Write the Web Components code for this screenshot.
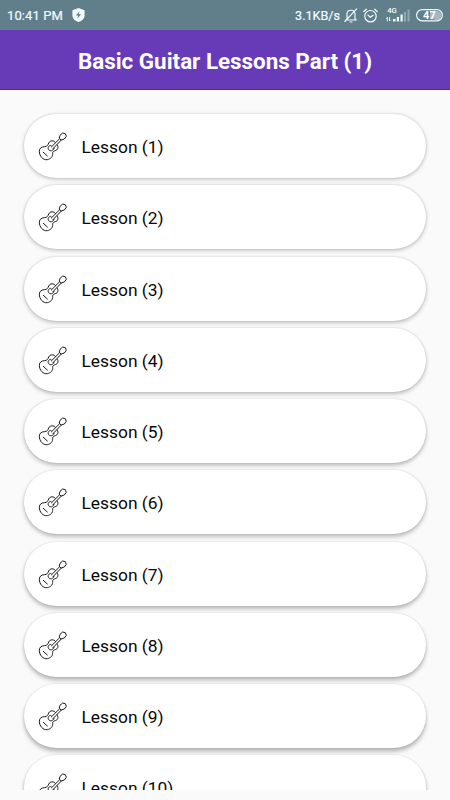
<!DOCTYPE html>
<html lang="en"><head><meta charset="utf-8"><title>Basic Guitar Lessons</title>
<style>body{margin:0;background:#fafafa;font-family:Roboto,sans-serif}</style></head>
<body><guitar-app></guitar-app>
<script>
const define = (name, html, setup) => customElements.define(name, class extends HTMLElement {
  connectedCallback() {
    if (this.shadowRoot) return;
    this.attachShadow({ mode: 'open' }).innerHTML = html;
    if (setup) setup(this);
  }
});

define('status-bar', `<style>
:host{display:flex;align-items:center;height:30px;box-sizing:border-box;padding:0 7px;background:#617e8b;color:#f2fbff;font-size:13px}
.time{letter-spacing:.1px;width:56px;margin-right:9px;white-space:nowrap;-webkit-text-stroke:.2px}
.rate{margin-left:auto;margin-right:4px;font-size:12.600px;white-space:nowrap;-webkit-text-stroke:.2px}
svg{display:block;flex:none;fill:none;stroke:#f2fbff;stroke-linecap:round;stroke-linejoin:round}
.bell{margin-right:5px}.clock{margin-right:8px}.signal{margin-right:6px}
</style>
<span class="time">10:41 PM</span>
<svg width="13" height="14" viewBox="0 0 13 14"><path d="M6.5 0 12.6 2.2V7c0 3.6-2.6 5.800-6.100 7C3 12.800.4 10.600.4 7V2.200Z" fill="#f2fbff" stroke="none"/><path d="M7.500 3.200 3.900 7.500h2.300L5.300 10.800l3.800-4.600H6.800Z" fill="#617e8b" stroke="none"/></svg>
<span class="rate">3.1KB/s</span>
<svg class="bell" width="14" height="15" viewBox="0 0 14 15"><path d="M3 11V6.200C3 3.800 4.500 2.300 7 2.300s4 1.500 4 3.900V11l1.200 1H1.800ZM6 14h2M12.700.8.8 13.500" stroke-width="1.150"/></svg>
<svg class="clock" width="15" height="15" viewBox="0 0 15 15"><circle cx="7.500" cy="8.200" r="5.700" stroke-width="1.200"/><path d="M.8 3.500 3.300 1.200M14.200 3.500 11.700 1.200M5 7.200l2.500 2 2.500-2" stroke-width="1.200"/></svg>
<svg class="signal" width="24" height="17" viewBox="0 0 24 17"><text x="1.200" y="6.300" fill="#f2fbff" stroke="none" font-size="7.800" font-weight="500">4G</text><path d="M1.300 10.500v3.500M.3 11.500l1-1M3.500 10.500v3.500l1-1" stroke-width=".9"/><g stroke="none" fill="#f2fbff"><path d="M7 12h2.500v2.500H7zM10.800 10h2.200v4.500h-2.200zM14.500 7.500h2.200v7h-2.200z"/><path opacity=".35" d="M18 5h2v9.500h-2zM21.500 2.500h2v12h-2z"/></g></svg>
<svg width="27" height="13" viewBox="0 0 27 13"><path d="M19 2h2a4.500 4.500 0 0 1 0 9h-2Z" fill="#a6b7bf" stroke="none"/><rect x=".6" y=".6" width="25.800" height="11.300" rx="5.650" stroke-width="1.100"/><rect x="14" y="2.200" width="6.300" height="8.100" fill="#a6b7bf" stroke="none"/><text x="13.400" y="10.300" text-anchor="middle" fill="#fff" stroke="none" font-size="11" font-weight="700">47</text></svg>`);

define('app-bar', `<style>
:host{display:flex;align-items:center;justify-content:center;height:60px;box-sizing:border-box;padding-top:2px;background:#673ab7;border-bottom:1px solid #54289e;color:#fff;font-size:22.400px;font-weight:700;white-space:nowrap}
</style><slot></slot>`);

define('guitar-icon', `<style>:host{display:block;width:40px;height:40px}svg{display:block}</style>
<svg width="40" height="40" viewBox="0 0 120 120" fill="none" stroke="#181818" stroke-width="3" stroke-linejoin="round" stroke-linecap="round">
<path d="M82 35 84 28 92 21 100 23 103 31 97 39 88 42Z"/>
<path d="M82 39 58 63M87 43 63 68"/>
<path d="M70 49C65 42 54 43 50 51C48 57 46 61 38 62C28 62 22 67 22 76C22 90 33 103 46 101C56 99 63 92 62 82C62 77 65 75 70 74C78 71 80 65 76 57"/>
<path d="M57 58C50 58 46 65 50 71C54 77 64 75 66 67M34 79 46 90"/>
</svg>`);

define('lesson-card', `<style>
:host{display:flex;align-items:center;height:64px;flex:none;box-sizing:border-box;padding-left:8px;border-radius:32px;background:#fff;color:#080808;font-size:17.400px;
box-shadow:0 var(--drop) 4px rgba(0,0,0,var(--depth)),0 0 2px rgba(0,0,0,.14)}
guitar-icon{margin:0 9.500px 0 0}.label{padding-top:2px;white-space:nowrap}
</style><guitar-icon></guitar-icon><span class="label"><slot></slot></span>`);

define('lesson-list', `<style>
:host{display:flex;flex-direction:column;gap:7.250px;height:700px;box-sizing:border-box;padding:24px 24px 0;overflow:hidden}
</style>`, el => {
  for (let i = 1; i <= 10; i++) {
    const card = document.createElement('lesson-card');
    card.textContent = `Lesson (${i})`;
    card.style.setProperty('--drop', 1 + i * .28 + 'px');
    card.style.setProperty('--depth', .22 + i * .006);
    el.shadowRoot.append(card);
  }
});

define('guitar-app', `<style>:host{display:flex;flex-direction:column;height:800px;overflow:hidden}status-bar,app-bar,lesson-list{flex:none}</style>
<status-bar></status-bar><app-bar>Basic Guitar Lessons Part (1)</app-bar><lesson-list></lesson-list>`);
</script></body></html>
